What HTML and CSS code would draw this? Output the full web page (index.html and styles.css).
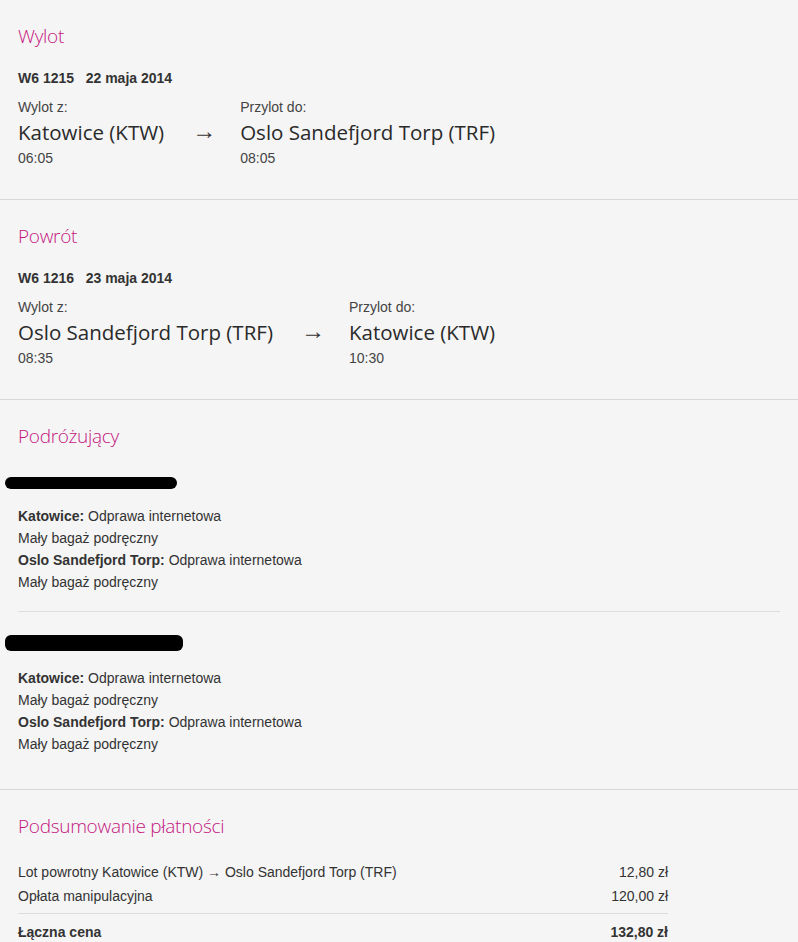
FILE: index.html
```html
<!DOCTYPE html>
<html lang="pl">
<head>
    <meta charset="UTF-8">
    <title>Podsumowanie rezerwacji</title>
    <link rel="stylesheet" href="styles.css">
</head>
<body>
    <div class="section">
        <h2>Wylot</h2>
        <div class="flight-no">W6 1215 &nbsp; 22 maja 2014</div>
        <div class="route">
            <div class="point">
                <div class="label">Wylot z:</div>
                <div class="airport">Katowice (KTW)</div>
                <div class="time">06:05</div>
            </div>
            <div class="arrow">&rarr;</div>
            <div class="point">
                <div class="label">Przylot do:</div>
                <div class="airport">Oslo Sandefjord Torp (TRF)</div>
                <div class="time">08:05</div>
            </div>
        </div>
    </div>

    <div class="section">
        <h2>Powrót</h2>
        <div class="flight-no">W6 1216 &nbsp; 23 maja 2014</div>
        <div class="route">
            <div class="point">
                <div class="label">Wylot z:</div>
                <div class="airport">Oslo Sandefjord Torp (TRF)</div>
                <div class="time">08:35</div>
            </div>
            <div class="arrow">&rarr;</div>
            <div class="point">
                <div class="label">Przylot do:</div>
                <div class="airport">Katowice (KTW)</div>
                <div class="time">10:30</div>
            </div>
        </div>
    </div>

    <div class="section passengers">
        <h2>Podróżujący</h2>
        <div class="passenger">
            <div class="redacted r1"></div>
            <p><strong>Katowice:</strong> Odprawa internetowa</p>
            <p>Mały bagaż podręczny</p>
            <p><strong>Oslo Sandefjord Torp:</strong> Odprawa internetowa</p>
            <p>Mały bagaż podręczny</p>
        </div>
        <div class="passenger">
            <div class="redacted r2"></div>
            <p><strong>Katowice:</strong> Odprawa internetowa</p>
            <p>Mały bagaż podręczny</p>
            <p><strong>Oslo Sandefjord Torp:</strong> Odprawa internetowa</p>
            <p>Mały bagaż podręczny</p>
        </div>
    </div>

    <div class="section summary">
        <h2>Podsumowanie płatności</h2>
        <div class="row"><span>Lot powrotny Katowice (KTW) &rarr; Oslo Sandefjord Torp (TRF)</span><span>12,80 zł</span></div>
        <div class="row"><span>Opłata manipulacyjna</span><span>120,00 zł</span></div>
        <div class="row total"><span>Łączna cena</span><span>132,80 zł</span></div>
    </div>
</body>
</html>
```

FILE: styles.css
```css
body { margin: 0; background: #f5f5f5; color: #333; font-family: "Liberation Sans", Arial, sans-serif; font-size: 14px; }
h2 { margin: 0; font-family: "Open Sans", sans-serif; font-weight: 300; font-size: 19px; letter-spacing: -0.3px; line-height: 28px; color: #c4167f; }

.section { padding: 22px 18px 31px; border-bottom: 1px solid #d8d8d8; }
.section h2 { margin-bottom: 20px; }

.flight-no { font-weight: bold; font-size: 14px; line-height: 16px; margin-bottom: 12px; }
.route { display: flex; align-items: flex-start; }
.label { font-size: 14px; line-height: 18px; color: #444; }
.airport { font-family: "Open Sans", sans-serif; font-size: 20.5px; line-height: 32px; color: #2a2a2a; }
.time { font-size: 14px; line-height: 20px; color: #444; }
.arrow { font-size: 24px; line-height: 32px; margin: 17px 24px 0 28px; color: #333; }

.passengers { padding-bottom: 34px; }
.passengers h2 { margin-bottom: 27px; }
.passenger p { margin: 0; line-height: 22px; }
.passenger + .passenger { border-top: 1px solid #ddd; margin-top: 18px; padding-top: 23px; }
.redacted { background: #000; border-radius: 6px; margin: 0 0 16px -13px; }
.r1 { width: 172px; height: 12px; margin-top: 2px; }
.r2 { width: 178px; height: 16px; margin-bottom: 16px; }

.summary { border-bottom: none; padding-bottom: 0; }
.summary h2 { margin-bottom: 20px; }
.summary .row { display: flex; justify-content: space-between; width: 650px; line-height: 24px; }
.summary .total { font-weight: bold; border-top: 1px solid #ddd; margin-top: 5px; padding-top: 6px; }
```
